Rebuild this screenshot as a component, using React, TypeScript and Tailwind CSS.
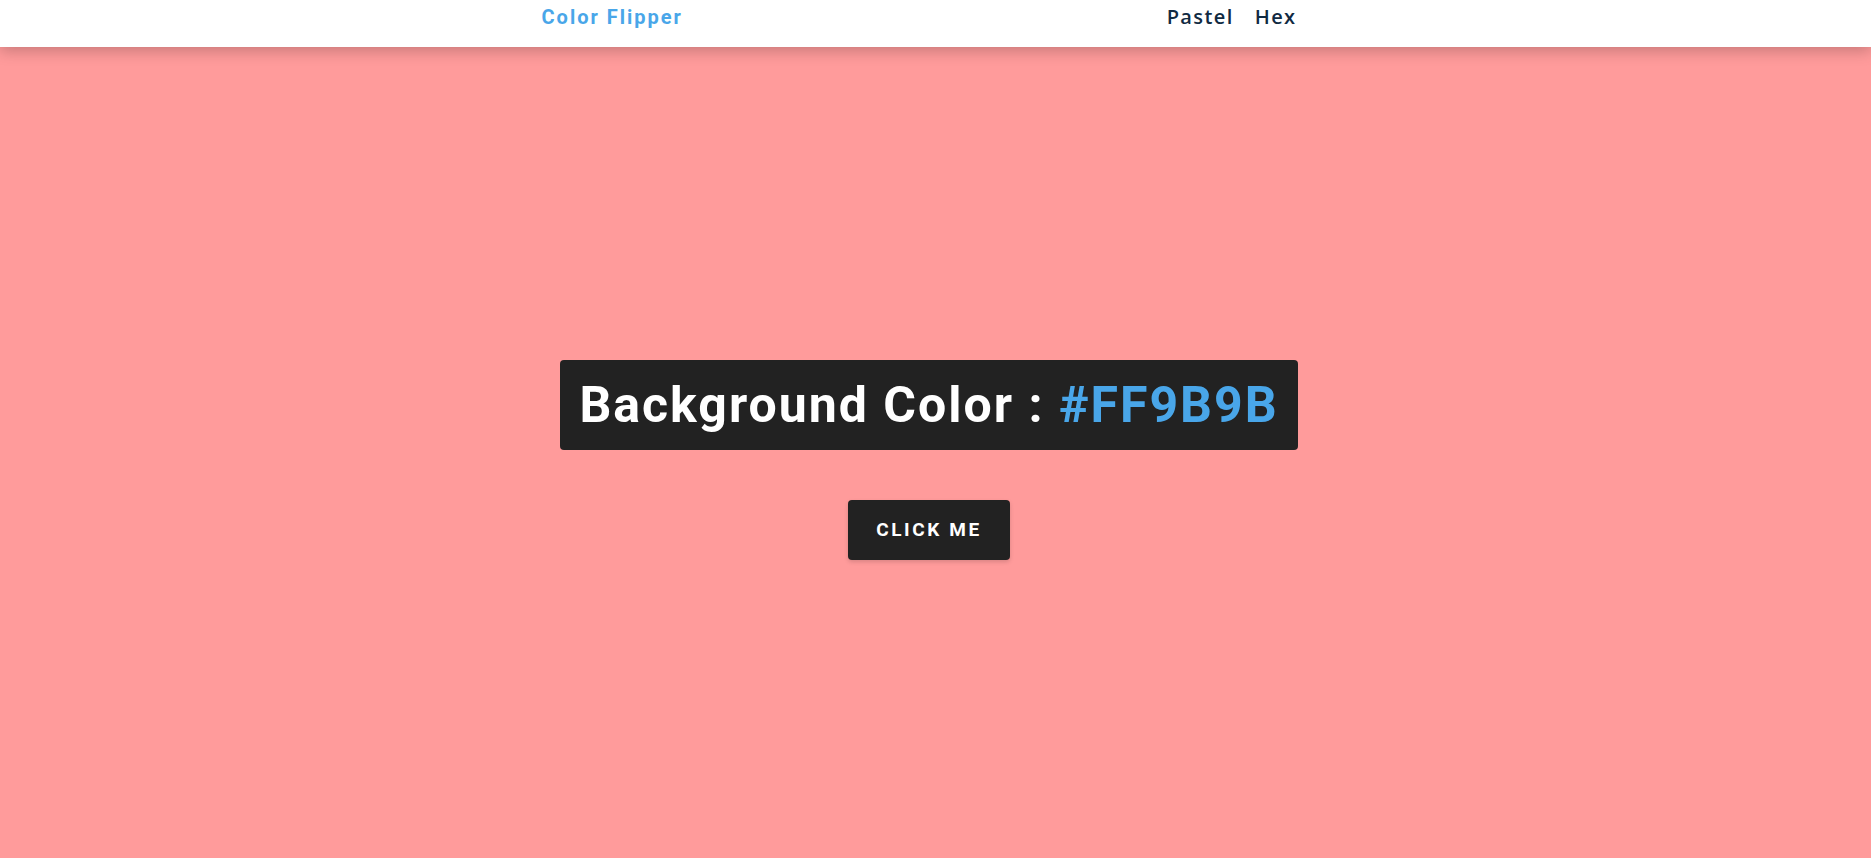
import { useState } from 'react';

const colors = ['#FF9B9B', '#A0E7E5', '#B4F8C8', '#FBE7C6', '#FFAEBC', '#C3B1E1'];

export default function App() {
  const [color, setColor] = useState('#FF9B9B');

  const handleClick = () => {
    const next = colors[Math.floor(Math.random() * colors.length)];
    setColor(next);
  };

  return (
    <div className="min-h-screen pr-[13px]" style={{ backgroundColor: color }}>
      {/* navbar */}
      <nav className="-mr-[13px] h-[47px] bg-white shadow-[0_4px_14px_rgba(0,0,0,0.22)] relative z-10">
        <div className="mx-auto flex h-full w-[788px] items-center justify-between pb-[13px] pr-[13px]">
          <h4 className="font-['Roboto',sans-serif] text-[20px] font-bold tracking-[2px] text-[#49a6e9]">
            Color Flipper
          </h4>
          <ul className="flex gap-[21px] pr-[20px] font-['Open_Sans',sans-serif] text-[20px] font-semibold tracking-[1.4px] text-[#102a42]">
            <li>Pastel</li>
            <li>Hex</li>
          </ul>
        </div>
      </nav>

      {/* main */}
      <main className="flex h-[811px] flex-col items-center pt-[313px]">
        <div className="flex h-[90px] w-[738px] items-center justify-center rounded-[4px] bg-[#222222] font-['Roboto',sans-serif] text-[50px] font-bold tracking-[2px] text-white">
          <h2>
            Background Color : <span className="text-[#49a6e9]">{color}</span>
          </h2>
        </div>
        <button
          onClick={handleClick}
          className="mt-[50px] flex h-[60px] w-[162px] items-center justify-center rounded-[4px] bg-[#222222] font-['Roboto',sans-serif] text-[19px] font-bold uppercase tracking-[2.6px] text-white shadow-[0_2px_4px_rgba(0,0,0,0.15)]"
        >
          Click me
        </button>
      </main>
    </div>
  );
}
